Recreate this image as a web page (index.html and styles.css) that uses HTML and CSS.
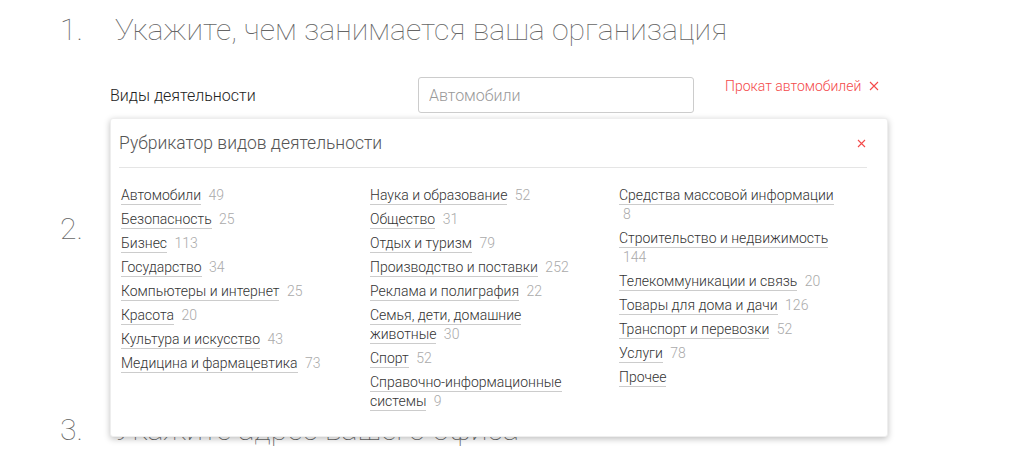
FILE: index.html
```html
<!DOCTYPE html>
<html lang="ru">

<head>
    <meta charset="UTF-8">
    <meta name="viewport" content="width=device-width, initial-scale=1.0">
    <title>Анкета организации</title>
    <link rel="stylesheet" href="styles.css">
</head>

<body>

    <div class="step step-one">
        <h2 class="step-title"><span class="step-num">1.</span>Укажите, чем занимается ваша организация</h2>
        <div class="field">
            <label class="field-label" for="activity">Виды деятельности</label>
            <input class="field-input" id="activity" type="text" placeholder="Автомобили">
            <span class="tag">Прокат автомобилей
                <svg class="tag-close" width="10" height="10" viewBox="0 0 10 10"><path d="M1 1L9 9M9 1L1 9" /></svg>
            </span>

            <div class="rubricator">
                <div class="rubricator-head">
                    <span class="rubricator-title">Рубрикатор видов деятельности</span>
                    <svg class="rubricator-close" width="9" height="9" viewBox="0 0 9 9"><path d="M1 1L8 8M8 1L1 8" /></svg>
                </div>
                <div class="rubricator-cols">
                    <ul class="rubric-list">
                        <li><a href="#">Автомобили</a> <span class="count">49</span></li>
                        <li><a href="#">Безопасность</a> <span class="count">25</span></li>
                        <li><a href="#">Бизнес</a> <span class="count">113</span></li>
                        <li><a href="#">Государство</a> <span class="count">34</span></li>
                        <li><a href="#">Компьютеры и интернет</a> <span class="count">25</span></li>
                        <li><a href="#">Красота</a> <span class="count">20</span></li>
                        <li><a href="#">Культура и искусство</a> <span class="count">43</span></li>
                        <li><a href="#">Медицина и фармацевтика</a> <span class="count">73</span></li>
                    </ul>
                    <ul class="rubric-list">
                        <li><a href="#">Наука и образование</a> <span class="count">52</span></li>
                        <li><a href="#">Общество</a> <span class="count">31</span></li>
                        <li><a href="#">Отдых и туризм</a> <span class="count">79</span></li>
                        <li><a href="#">Производство и поставки</a> <span class="count">252</span></li>
                        <li><a href="#">Реклама и полиграфия</a> <span class="count">22</span></li>
                        <li><a href="#">Семья, дети, домашние животные</a> <span class="count">30</span></li>
                        <li><a href="#">Спорт</a> <span class="count">52</span></li>
                        <li><a href="#">Справочно-информационные системы</a> <span class="count">9</span></li>
                    </ul>
                    <ul class="rubric-list">
                        <li><a href="#">Средства массовой информации</a> <span class="count">8</span></li>
                        <li><a href="#">Строительство и недвижимость</a> <span class="count">144</span></li>
                        <li><a href="#">Телекоммуникации и связь</a> <span class="count">20</span></li>
                        <li><a href="#">Товары для дома и дачи</a> <span class="count">126</span></li>
                        <li><a href="#">Транспорт и перевозки</a> <span class="count">52</span></li>
                        <li><a href="#">Услуги</a> <span class="count">78</span></li>
                        <li><a href="#">Прочее</a></li>
                    </ul>
                </div>
            </div>
        </div>
    </div>

    <div class="step step-two">
        <h2 class="step-title"><span class="step-num">2.</span>Расскажите о вашей организации</h2>
    </div>

    <div class="step">
        <h2 class="step-title"><span class="step-num">3.</span>Укажите адрес вашего офиса</h2>
    </div>

</body>

</html>
```

FILE: styles.css
```css
body {
    margin: 0;
    font-family: Roboto, "Noto Sans", sans-serif;
    color: #333;
    background: #fff;
}

.step {
    padding-left: 60px;
}

.step-title {
    display: flex;
    margin: 0;
    padding-top: 12px;
    font-size: 30.2px;
    line-height: 36px;
    font-weight: 100;
    color: #666;
}

.step-num {
    width: 55px;
}

.step-one {
    height: 199px;
}

.step-two {
    height: 201px;
}

.field {
    position: relative;
    display: flex;
    align-items: center;
    margin: 29px 0 0 50px;
}

.field-label {
    width: 308px;
    font-size: 16px;
    font-weight: 300;
    color: #222;
}

.field-input {
    box-sizing: border-box;
    width: 276px;
    height: 36px;
    padding: 0 10px;
    border: 1px solid #ccc;
    border-radius: 3px;
    font-family: inherit;
    font-size: 16px;
    font-weight: 300;
    color: #333;
}

.field-input::placeholder {
    color: #999;
}

.tag {
    align-self: flex-start;
    margin: 1px 0 0 31px;
    font-size: 14px;
    font-weight: 300;
    color: #f44a4a;
}

.tag-close {
    margin-left: 4px;
    stroke: #f44a4a;
    stroke-width: 1.1;
}

.rubricator {
    position: absolute;
    top: 41px;
    left: 0;
    z-index: 2;
    box-sizing: border-box;
    width: 778px;
    height: 319px;
    padding: 0 20px 0 8px;
    background: #fff;
    border: 1px solid #eee;
    border-radius: 3px;
    box-shadow: 0 2px 6px rgba(0, 0, 0, 0.25);
}

.rubricator-head {
    display: flex;
    justify-content: space-between;
    align-items: center;
    height: 48px;
    border-bottom: 1px solid #e5e5e5;
}

.rubricator-title {
    font-size: 17.5px;
    font-weight: 300;
    color: #555;
}

.rubricator-close {
    margin-right: 1px;
    stroke: #f44a4a;
    stroke-width: 1.1;
}

.rubricator-cols {
    display: grid;
    grid-template-columns: repeat(3, 229px);
    column-gap: 20px;
    padding: 18px 0 0 2px;
}

.rubric-list {
    margin: 0;
    padding: 0;
    list-style: none;
}

.rubric-list li {
    max-width: 218px;
    margin-bottom: 5px;
    font-size: 14px;
    line-height: 19px;
    font-weight: 300;
}

.rubric-list a {
    color: #333;
    text-decoration: none;
    border-bottom: 1px solid #ccc;
    padding-bottom: 1px;
}

.count {
    margin-left: 4px;
    color: #aaa;
}
```
